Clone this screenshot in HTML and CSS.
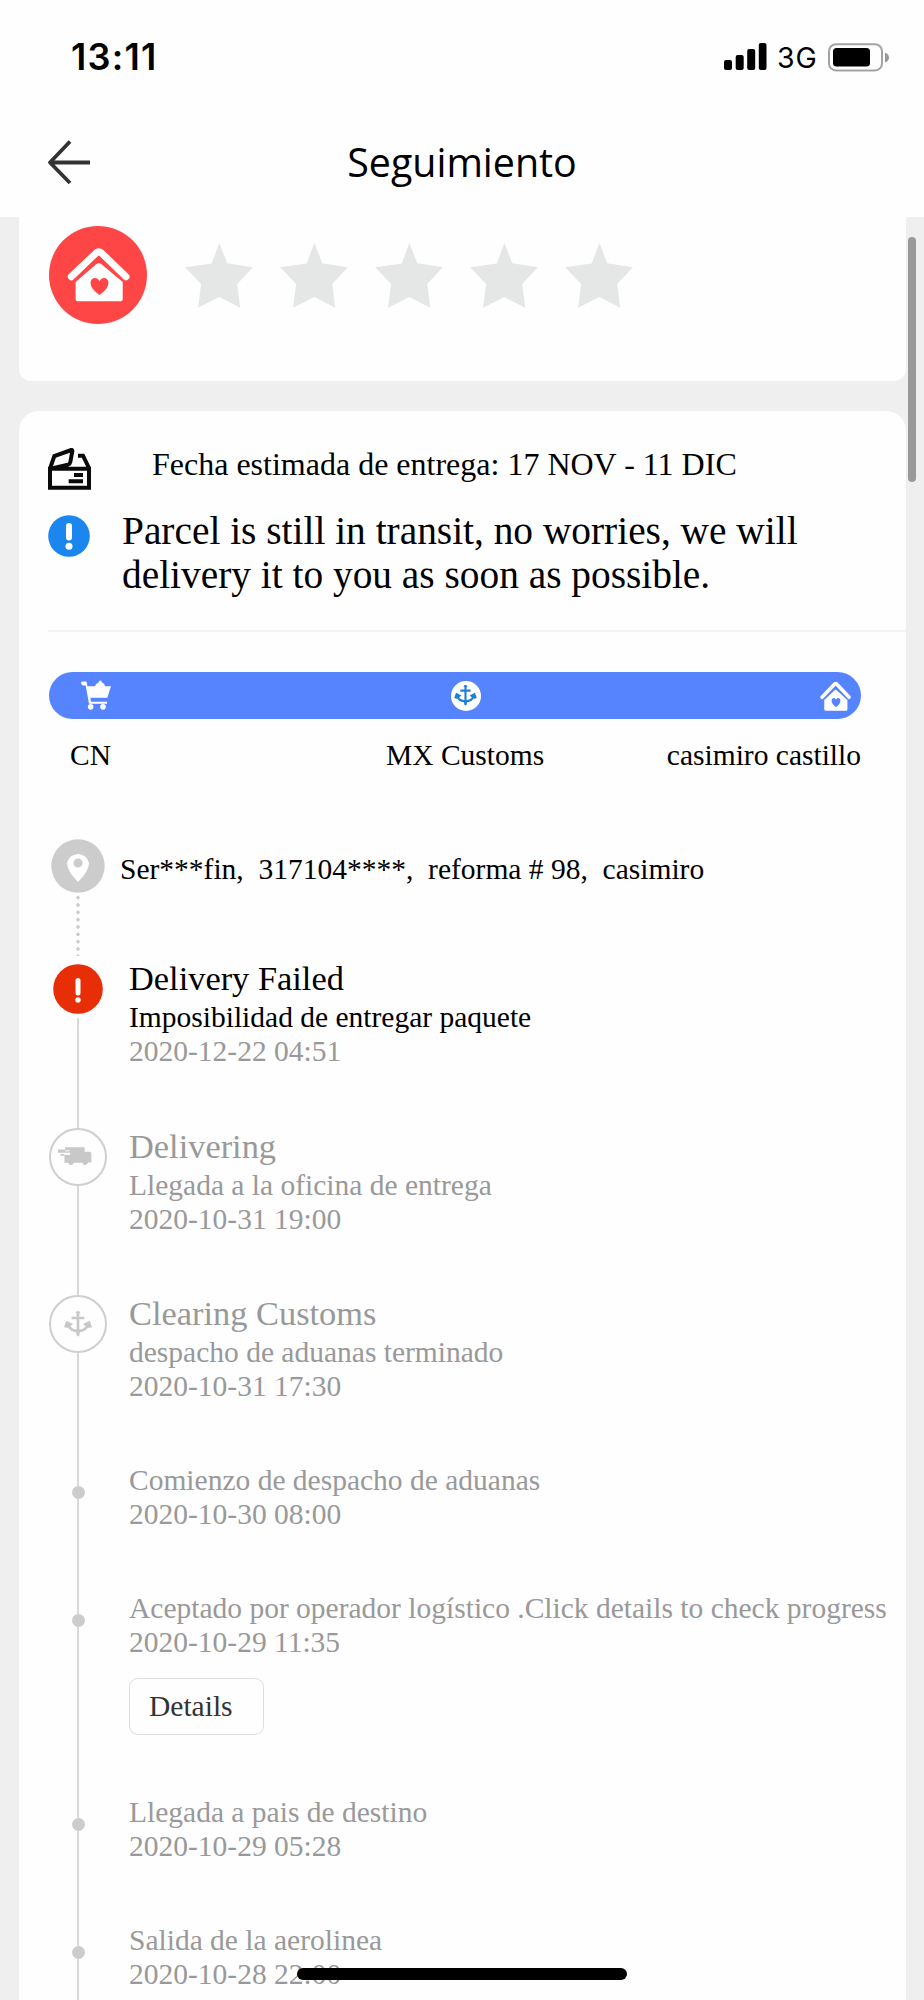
FILE: index.html
```html
<!DOCTYPE html>
<html lang="es">
<head>
<meta charset="utf-8">
<title>Seguimiento</title>
<link rel="stylesheet" href="styles.css">
</head>
<body>
<svg class="defs" width="0" height="0" aria-hidden="true">
  <symbol id="house" viewBox="0 0 190 165" preserveAspectRatio="none">
    <path d="M13 89 L88 18 Q96 11 104 18 L178 89" fill="none" stroke="currentColor" stroke-width="21" stroke-linecap="round" stroke-linejoin="round"/>
    <path fill="currentColor" fill-rule="evenodd" d="M26 105 L88 52 Q96 45 104 52 L168 105 V155 Q168 163 160 163 H34 Q26 163 26 155Z M98 144 Q71 125 71 108 C71 90 92 88 98 103 C104 88 125 90 125 108 Q125 125 98 144Z"/>
  </symbol>
  <symbol id="star" viewBox="0 0 204 196">
    <path fill="currentColor" d="M103 0 L127 61 L204 73 L157 124 L166 195 L103 163 L39 195 L48 124 L0 73 L80 62Z"/>
  </symbol>
  <symbol id="anchor" viewBox="0 0 84 78">
    <path fill="none" stroke="currentColor" stroke-width="8" d="M42 3 V74 M23 21 H61 M12 40 C18 67 66 67 72 40"/>
    <path fill="currentColor" d="M0 48 L7 29 L27 39 L20 45 L9 51Z M84 48 L77 29 L57 39 L64 45 L75 51Z M34 58 L42 78 L50 58Z M35 7 a7 7 0 0 1 14 0Z"/>
  </symbol>
</svg>

<header class="header">
  <div class="status">
    <span class="clock">13:11</span>
    <div class="indicators">
      <svg width="43" height="27" viewBox="0 0 43 27"><rect x="0" y="17" width="8" height="10" rx="2"/><rect x="11.7" y="12" width="8" height="15" rx="2"/><rect x="23.2" y="6" width="8" height="21" rx="2"/><rect x="34.8" y="0" width="7.7" height="27" rx="2"/></svg>
      <span class="network">3G</span>
      <svg width="62" height="29" viewBox="0 0 62 29"><rect x="1" y="1.2" width="53" height="26.2" rx="7" fill="none" stroke="#a3a3a3" stroke-width="2"/><rect x="5" y="5" width="37" height="18.5" rx="3.5"/><path fill="#999" d="M57 9.5 Q61 11 61 14.5 Q61 18 57 19.500Z"/></svg>
    </div>
  </div>
  <div class="navbar">
    <svg class="back" width="43" height="45" viewBox="0 0 43 45"><path d="M22 1.500 L2 22.500 L22 43 M2 22.500 H42" fill="none" stroke="#333" stroke-width="3.800" stroke-linejoin="round"/></svg>
    <h1 class="title">Seguimiento</h1>
  </div>
</header>

<main class="page">
  <section class="card rating">
    <div class="logo"><svg width="63" height="55"><use href="#house"/></svg></div>
    <div class="stars">
      <svg><use href="#star"/></svg><svg><use href="#star"/></svg><svg><use href="#star"/></svg><svg><use href="#star"/></svg><svg><use href="#star"/></svg>
    </div>
  </section>

  <section class="card tracking">
    <div class="estimate">
      <svg width="43" height="42" viewBox="0 0 129 126"><path fill="none" stroke="#0a0a0a" stroke-width="12" d="M6 62 H123 V119 H6Z M6 62 L19 24 L70 6 Q73 5 73 9 L67 42 Q66 48 60 50 L8 62 M90 23 H105 L123 60 M78 81 H105 M62 100 H105"/></svg>
      <p>Fecha estimada de entrega: 17 NOV - 11 DIC</p>
    </div>
    <div class="notice">
      <svg width="42" height="42" viewBox="0 0 42 42"><circle cx="21" cy="21" r="20.800" fill="#1b87ee"/><path d="M21 11 V22.500" stroke="#fff" stroke-width="6" stroke-linecap="round"/><circle cx="21" cy="31.300" r="3.500" fill="#fff"/></svg>
      <p>Parcel is still in transit, no worries, we will<br>delivery it to you as soon as possible.</p>
    </div>
    <div class="route">
      <div class="bar">
        <svg width="30" height="31" viewBox="0 0 90 92"><path fill="#fff" d="M0 8 Q1 3 7 4 H15 Q18 5 19 18 H90 L79 53 H28 L30 65 H78 V71 H24 L14 16 H6 Q0 14 0 8Z M43 18 Q43 10 51 9 Q53 0 60 1 L63 7 Q71 9 72 18Z"/><circle cx="29" cy="80" r="8.500" fill="#fff"/><circle cx="66" cy="80" r="8.500" fill="#fff"/></svg>
        <div class="port"><svg width="25" height="21"><use href="#anchor"/></svg></div>
        <svg class="home" width="31" height="30"><use href="#house"/></svg>
      </div>
      <div class="places"><span>CN</span><span>MX Customs</span><span>casimiro castillo</span></div>
    </div>

    <div class="address">
      <div class="rail">
        <svg width="54" height="54" viewBox="0 0 54 54"><circle cx="27" cy="27" r="26.700" fill="#ccc"/><path fill="#fff" fill-rule="evenodd" d="M27 43 Q16 32 16 24 A11.200 11.200 0 0 1 38 24 Q38 32 27 43Z M31.500 24 A4.500 4.500 0 1 0 22.500 24 A4.500 4.500 0 0 0 31.500 24Z"/></svg>
        <span class="dots"></span>
      </div>
      <p>Ser***fin,&nbsp; 317104****,&nbsp; reforma # 98,&nbsp; casimiro</p>
    </div>

    <ol class="timeline">
      <li class="event failed">
        <div class="rail"><span class="lead"></span>
          <svg width="50" height="50" viewBox="0 0 50 50"><circle cx="25" cy="25" r="24.800" fill="#e72e06"/><path d="M25 16.500 V29" stroke="#fff" stroke-width="5" stroke-linecap="round"/><circle cx="25" cy="36" r="2.700" fill="#fff"/></svg>
          <span class="line"></span></div>
        <div class="info"><h2>Delivery Failed</h2><p class="desc">Imposibilidad de entregar paquete</p><p>2020-12-22 04:51</p></div>
      </li>
      <li class="event delivering">
        <div class="rail"><span class="lead"></span>
          <div class="ring"><svg width="34" height="18" viewBox="0 0 106 56"><path fill="#c8c8c8" d="M22 1 H83 V15 H98 Q104 15 104 22 V48 H94 Q91 56 84 56 Q77 56 76 49 H49 Q47 56 40 56 Q34 56 31 49 H20 V27 H8 V22 H38 V18 H0 V8 H22Z"/><path stroke="#fff" stroke-width="3" d="M22 12 H36 M18 23 H38"/></svg></div>
          <span class="line"></span></div>
        <div class="info"><h2>Delivering</h2><p>Llegada a la oficina de entrega</p><p>2020-10-31 19:00</p></div>
      </li>
      <li class="event customs">
        <div class="rail"><span class="lead"></span>
          <div class="ring"><svg width="28" height="26"><use href="#anchor"/></svg></div>
          <span class="line"></span></div>
        <div class="info"><h2>Clearing Customs</h2><p>despacho de aduanas terminado</p><p>2020-10-31 17:30</p></div>
      </li>
      <li class="event step">
        <div class="rail"><span class="lead"></span><span class="dot"></span><span class="line"></span></div>
        <div class="info"><p>Comienzo de despacho de aduanas</p><p>2020-10-30 08:00</p></div>
      </li>
      <li class="event step detailed">
        <div class="rail"><span class="lead"></span><span class="dot"></span><span class="line"></span></div>
        <div class="info"><p>Aceptado por operador logístico .Click details to check progress</p><p>2020-10-29 11:35</p><button class="details">Details</button></div>
      </li>
      <li class="event step">
        <div class="rail"><span class="lead"></span><span class="dot"></span><span class="line"></span></div>
        <div class="info"><p>Llegada a pais de destino</p><p>2020-10-29 05:28</p></div>
      </li>
      <li class="event step">
        <div class="rail"><span class="lead"></span><span class="dot"></span><span class="line"></span></div>
        <div class="info"><p>Salida de la aerolinea</p><p>2020-10-28 22:00</p></div>
      </li>
    </ol>
  </section>
  <div class="scrollbar"></div>
</main>
<div class="home-indicator"></div>
</body>
</html>
```
FILE: styles.css
```css
* { box-sizing: border-box; margin: 0; padding: 0; }
html { overflow: hidden; }
body {
  position: relative;
  width: 924px;
  height: 2000px;
  overflow: hidden;
  background: #efefef;
  color: #000;
  font-family: "Liberation Serif", "Times New Roman", serif;
  font-size: 29.5px;
  line-height: 34.4px;
}
svg { display: block; flex: none; }
p, h2, .places span { white-space: nowrap; }
.defs { position: absolute; }

.header { height: 217px; background: #fefefe; }
.status {
  display: flex;
  justify-content: space-between;
  height: 113px;
  padding: 35px 34px 0 71px;
  font-family: Inter, sans-serif;
}
.clock { font-size: 36.2px; font-weight: 600; line-height: 44px; letter-spacing: 1.2px; }
.indicators { display: flex; align-items: flex-start; padding-top: 8px; }
.network { width: 61px; padding-left: 10px; font-size: 28.5px; line-height: 30px; letter-spacing: 0.8px; }
.navbar { display: grid; grid-template-columns: 48px 1fr 49px; height: 104px; }
.back { grid-area: 1 / 2; margin-top: 27px; }
.title {
  grid-area: 1 / 1 / 2 / 4;
  padding-top: 23px;
  text-align: center;
  font: 400 39.4px/52px "Open Sans", sans-serif;
}

.page { position: relative; height: 1783px; padding: 0 18px 0 19px; }
.card { background: #fefefe; }
.rating {
  display: flex;
  gap: 38px;
  height: 164px;
  padding: 9px 0 0 30px;
  border-radius: 0 0 12px 12px;
}
.logo {
  display: flex;
  justify-content: center;
  width: 98px;
  height: 98px;
  padding-top: 21px;
  border-radius: 50%;
  background: #ff4646;
  color: #fff;
}
.stars { display: flex; gap: 27px; padding-top: 17px; color: #e5e6e6; }
.stars svg { width: 68px; height: 65px; }

.tracking { height: 1589px; margin-top: 30px; padding: 37px 0 0 29px; border-radius: 20px 20px 0 0; }
.estimate { display: flex; gap: 61px; height: 67px; }
.estimate p { font-size: 32px; line-height: 36px; margin-top: -2px; }
.notice { display: flex; gap: 32px; height: 117px; border-bottom: 2px solid #f4f4f4; }
.notice p { font-size: 39.36px; line-height: 44px; margin-top: -6px; }

.route { width: 813px; padding: 40px 0 0 1px; }
.bar {
  display: flex;
  align-items: center;
  justify-content: space-between;
  height: 47px;
  padding: 0 10px 0 32px;
  border-radius: 24px;
  background: #5684fe;
  color: #fff;
}
.port {
  display: grid;
  place-items: center;
  width: 30px;
  height: 30px;
  border-radius: 50%;
  background: #fff;
  color: #1c80d8;
}
.places { display: grid; grid-template-columns: 316px 1fr auto; height: 120px; padding: 19px 0 0 21px; }

.address { display: flex; height: 117px; }
.address p { margin: 13px 0 0 12px; }
.rail { display: flex; flex-direction: column; align-items: center; flex: none; width: 60px; }
.dots {
  width: 4px;
  height: 66px;
  margin-top: 1px;
  background: radial-gradient(circle, #ccc 1.5px, transparent 1.8px) 0 0 / 4px 7.33px;
}

.timeline { list-style: none; color: #999; }
.event { display: flex; gap: 21px; height: 128px; }
.info { padding-top: 1px; }
.event h2 { font-size: 34.4px; font-weight: 400; line-height: 43px; }
.lead, .line { width: 2px; background: #d9d9d9; }
.line { flex: 1; }
.failed { height: 168px; }
.failed .lead { height: 8px; background: none; }
.failed .line { margin-top: 4px; }
.failed h2, .failed .desc { color: #000; }
.delivering { height: 167px; }
.delivering .lead, .customs .lead { height: 4px; }
.customs { height: 171px; }
.ring {
  display: grid;
  place-items: center;
  width: 58px;
  height: 58px;
  border: 2px solid #cfcfcf;
  border-radius: 50%;
  color: #c8c8c8;
}
.delivering .ring svg { margin: 0 6px 2px 0; }
.step .lead { height: 24px; }
.dot { width: 13px; height: 13px; border-radius: 50%; background: #ccc; }
.detailed { height: 204px; }
.details {
  display: block;
  width: 135px;
  height: 57px;
  margin-top: 18px;
  padding-left: 19px;
  border: 1.500px solid #ddd;
  border-radius: 9px;
  background: #fefefe;
  color: #333;
  font: inherit;
  text-align: left;
}

.scrollbar {
  position: absolute;
  top: 20px;
  right: 8px;
  width: 8px;
  height: 245px;
  border-radius: 4px;
  background: #999;
}
.home-indicator {
  position: absolute;
  left: 297px;
  top: 1968px;
  width: 330px;
  height: 12px;
  border-radius: 6px;
  background: #000;
}
```
